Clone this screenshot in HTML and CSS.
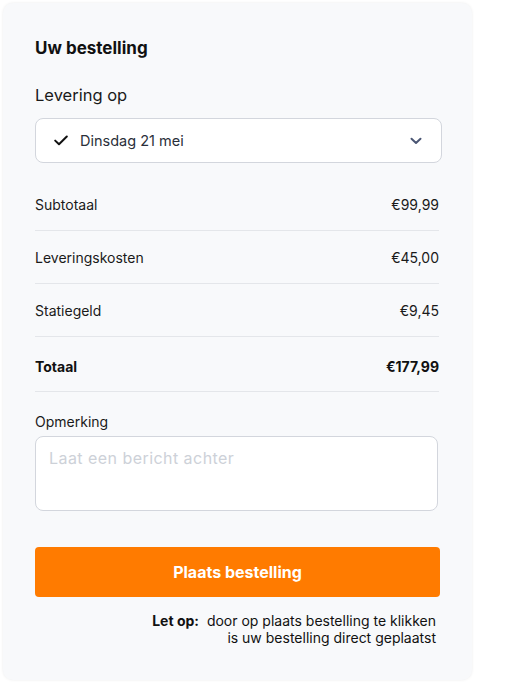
FILE: index.html
```html
<!DOCTYPE html>
<html lang="nl">
<head>
<meta charset="utf-8">
<link rel="stylesheet" href="styles.css">
</head>
<body>
<div class="card">
  <h2 class="title">Uw bestelling</h2>
  <div class="label-lg">Levering op</div>
  <div class="select">
    <svg class="check" width="14" height="11" viewBox="0 0 14 11"><path d="M1.2 5.6 L5 9.3 L12.8 1.5" fill="none" stroke="#111" stroke-width="2" stroke-linecap="round" stroke-linejoin="round"/></svg>
    <span class="select-text">Dinsdag 21 mei</span>
    <svg class="chev" width="12" height="8" viewBox="0 0 12 8"><path d="M1.5 1.8 L6 6 L10.5 1.8" fill="none" stroke="#4b5674" stroke-width="2" stroke-linecap="round" stroke-linejoin="round"/></svg>
  </div>
  <div class="rows">
    <div class="row"><span>Subtotaal</span><span>€99,99</span></div>
    <div class="row"><span>Leveringskosten</span><span>€45,00</span></div>
    <div class="row"><span>Statiegeld</span><span>€9,45</span></div>
    <div class="row total"><span>Totaal</span><span>€177,99</span></div>
  </div>
  <div class="label-sm">Opmerking</div>
  <div class="textarea"><span class="placeholder">Laat een bericht achter</span></div>
  <button class="btn">Plaats bestelling</button>
  <div class="note">
    <div><b>Let op:</b>&nbsp; door op plaats bestelling te klikken</div>
    <div>is uw bestelling direct geplaatst</div>
  </div>
</div>
</body>
</html>
```

FILE: styles.css
```css
* { box-sizing: border-box; }
html, body { margin: 0; background: #fff; }
body {
  padding: 3px;
  font-family: Inter, "Noto Sans", sans-serif;
  color: #111;
}
.card {
  width: 469px;
  height: 677px;
  background: #f8f9fb;
  border-radius: 10px;
  box-shadow: 0 0 3px rgba(0,0,0,0.08);
  padding: 33px 32px 0 32px;
  display: flex;
  flex-direction: column;
}
.title {
  margin: 0;
  font-size: 17px;
  line-height: 24px;
  font-weight: 700;
  color: #111;
}
.label-lg {
  margin-top: 23px;
  font-size: 16.5px;
  line-height: 24px;
  color: #1a1a1a;
}
.select {
  margin-top: 11px;
  width: 407px;
  height: 45px;
  background: #fff;
  border: 1px solid #d3d6dd;
  border-radius: 8px;
  display: flex;
  align-items: center;
  padding: 0 19px 0 18px;
}
.check { flex: none; }
.select-text {
  margin-left: 12px;
  font-size: 14.5px;
  color: #2a2f3a;
  flex: 1;
}
.chev { flex: none; }
.rows {
  margin-top: 15px;
  width: 404px;
}
.row {
  height: 53px;
  display: flex;
  justify-content: space-between;
  align-items: center;
  font-size: 14px;
  color: #1a1a1a;
  border-bottom: 1px solid #e4e6ea;
}
.row.total {
  height: 55px;
  font-weight: 700;
  color: #111;
  padding-top: 5px;
}
.label-sm {
  margin-top: 20px;
  font-size: 14px;
  line-height: 20px;
  color: #1a1a1a;
}
.textarea {
  margin-top: 4px;
  width: 403px;
  height: 75px;
  background: #fff;
  border: 1px solid #d3d6dd;
  border-radius: 8px;
  padding: 11px 13px;
}
.placeholder {
  font-size: 16px;
  letter-spacing: 0.45px;
  color: #cdd1d8;
}
.btn {
  margin-top: 36px;
  width: 405px;
  height: 50px;
  border: none;
  border-radius: 4px;
  background: #ff7b00;
  color: #fff;
  font-family: Inter, "Noto Sans", sans-serif;
  font-size: 16px;
  font-weight: 700;
  padding: 0;
}
.note {
  margin-top: 15px;
  width: 401px;
  text-align: right;
  font-size: 14px;
  line-height: 17px;
  color: #111;
}
.note b { font-weight: 700; }
```
